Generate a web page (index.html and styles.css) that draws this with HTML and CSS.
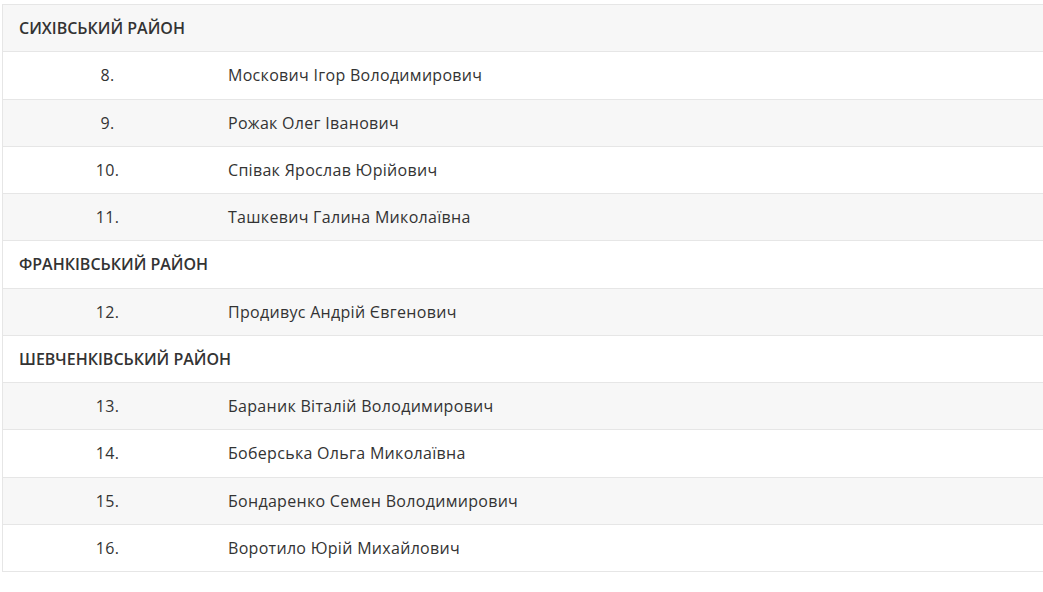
FILE: index.html
```html
<!DOCTYPE html>
<html lang="uk">
<head>
  <meta charset="UTF-8">
  <meta name="viewport" content="width=device-width, initial-scale=1.0">
  <title>Депутати за районами</title>
  <link rel="stylesheet" href="styles.css">
</head>
<body>
  <div class="container">
    <table class="deputies">
      <tbody>
        <tr class="district"><th colspan="2">Сихівський район</th></tr>
        <tr><td class="num">8.</td><td>Москович Ігор Володимирович</td></tr>
        <tr><td class="num">9.</td><td>Рожак Олег Іванович</td></tr>
        <tr><td class="num">10.</td><td>Співак Ярослав Юрійович</td></tr>
        <tr><td class="num">11.</td><td>Ташкевич Галина Миколаївна</td></tr>
        <tr class="district"><th colspan="2">Франківський район</th></tr>
        <tr><td class="num">12.</td><td>Продивус Андрій Євгенович</td></tr>
        <tr class="district"><th colspan="2">Шевченківський район</th></tr>
        <tr><td class="num">13.</td><td>Бараник Віталій Володимирович</td></tr>
        <tr><td class="num">14.</td><td>Боберська Ольга Миколаївна</td></tr>
        <tr><td class="num">15.</td><td>Бондаренко Семен Володимирович</td></tr>
        <tr><td class="num">16.</td><td>Воротило Юрій Михайлович</td></tr>
      </tbody>
    </table>
  </div>
</body>
</html>
```

FILE: styles.css
```css
html, body {
  margin: 0;
  overflow: hidden;
}

body {
  font-family: "Open Sans", "Noto Sans", sans-serif;
  font-size: 16px;
  color: #333;
  background-color: #fff;
}

.container {
  padding: 4px 0 0 2px;
}

.deputies {
  border-collapse: collapse;
  width: 1060px;
  border-left: 1px solid #e6e6e6;
}

.deputies th,
.deputies td {
  border-top: 1px solid #e6e6e6;
  border-bottom: 1px solid #e6e6e6;
  padding: 12px 16px;
  height: 22.25px;
  line-height: 22px;
  text-align: left;
  letter-spacing: 0.3px;
}

.deputies tr:nth-child(odd) {
  background-color: #f7f7f7;
}

.deputies th {
  font-weight: 600;
  text-transform: uppercase;
  letter-spacing: 0;
}

.deputies td.num {
  width: 177px;
  text-align: center;
}
```
